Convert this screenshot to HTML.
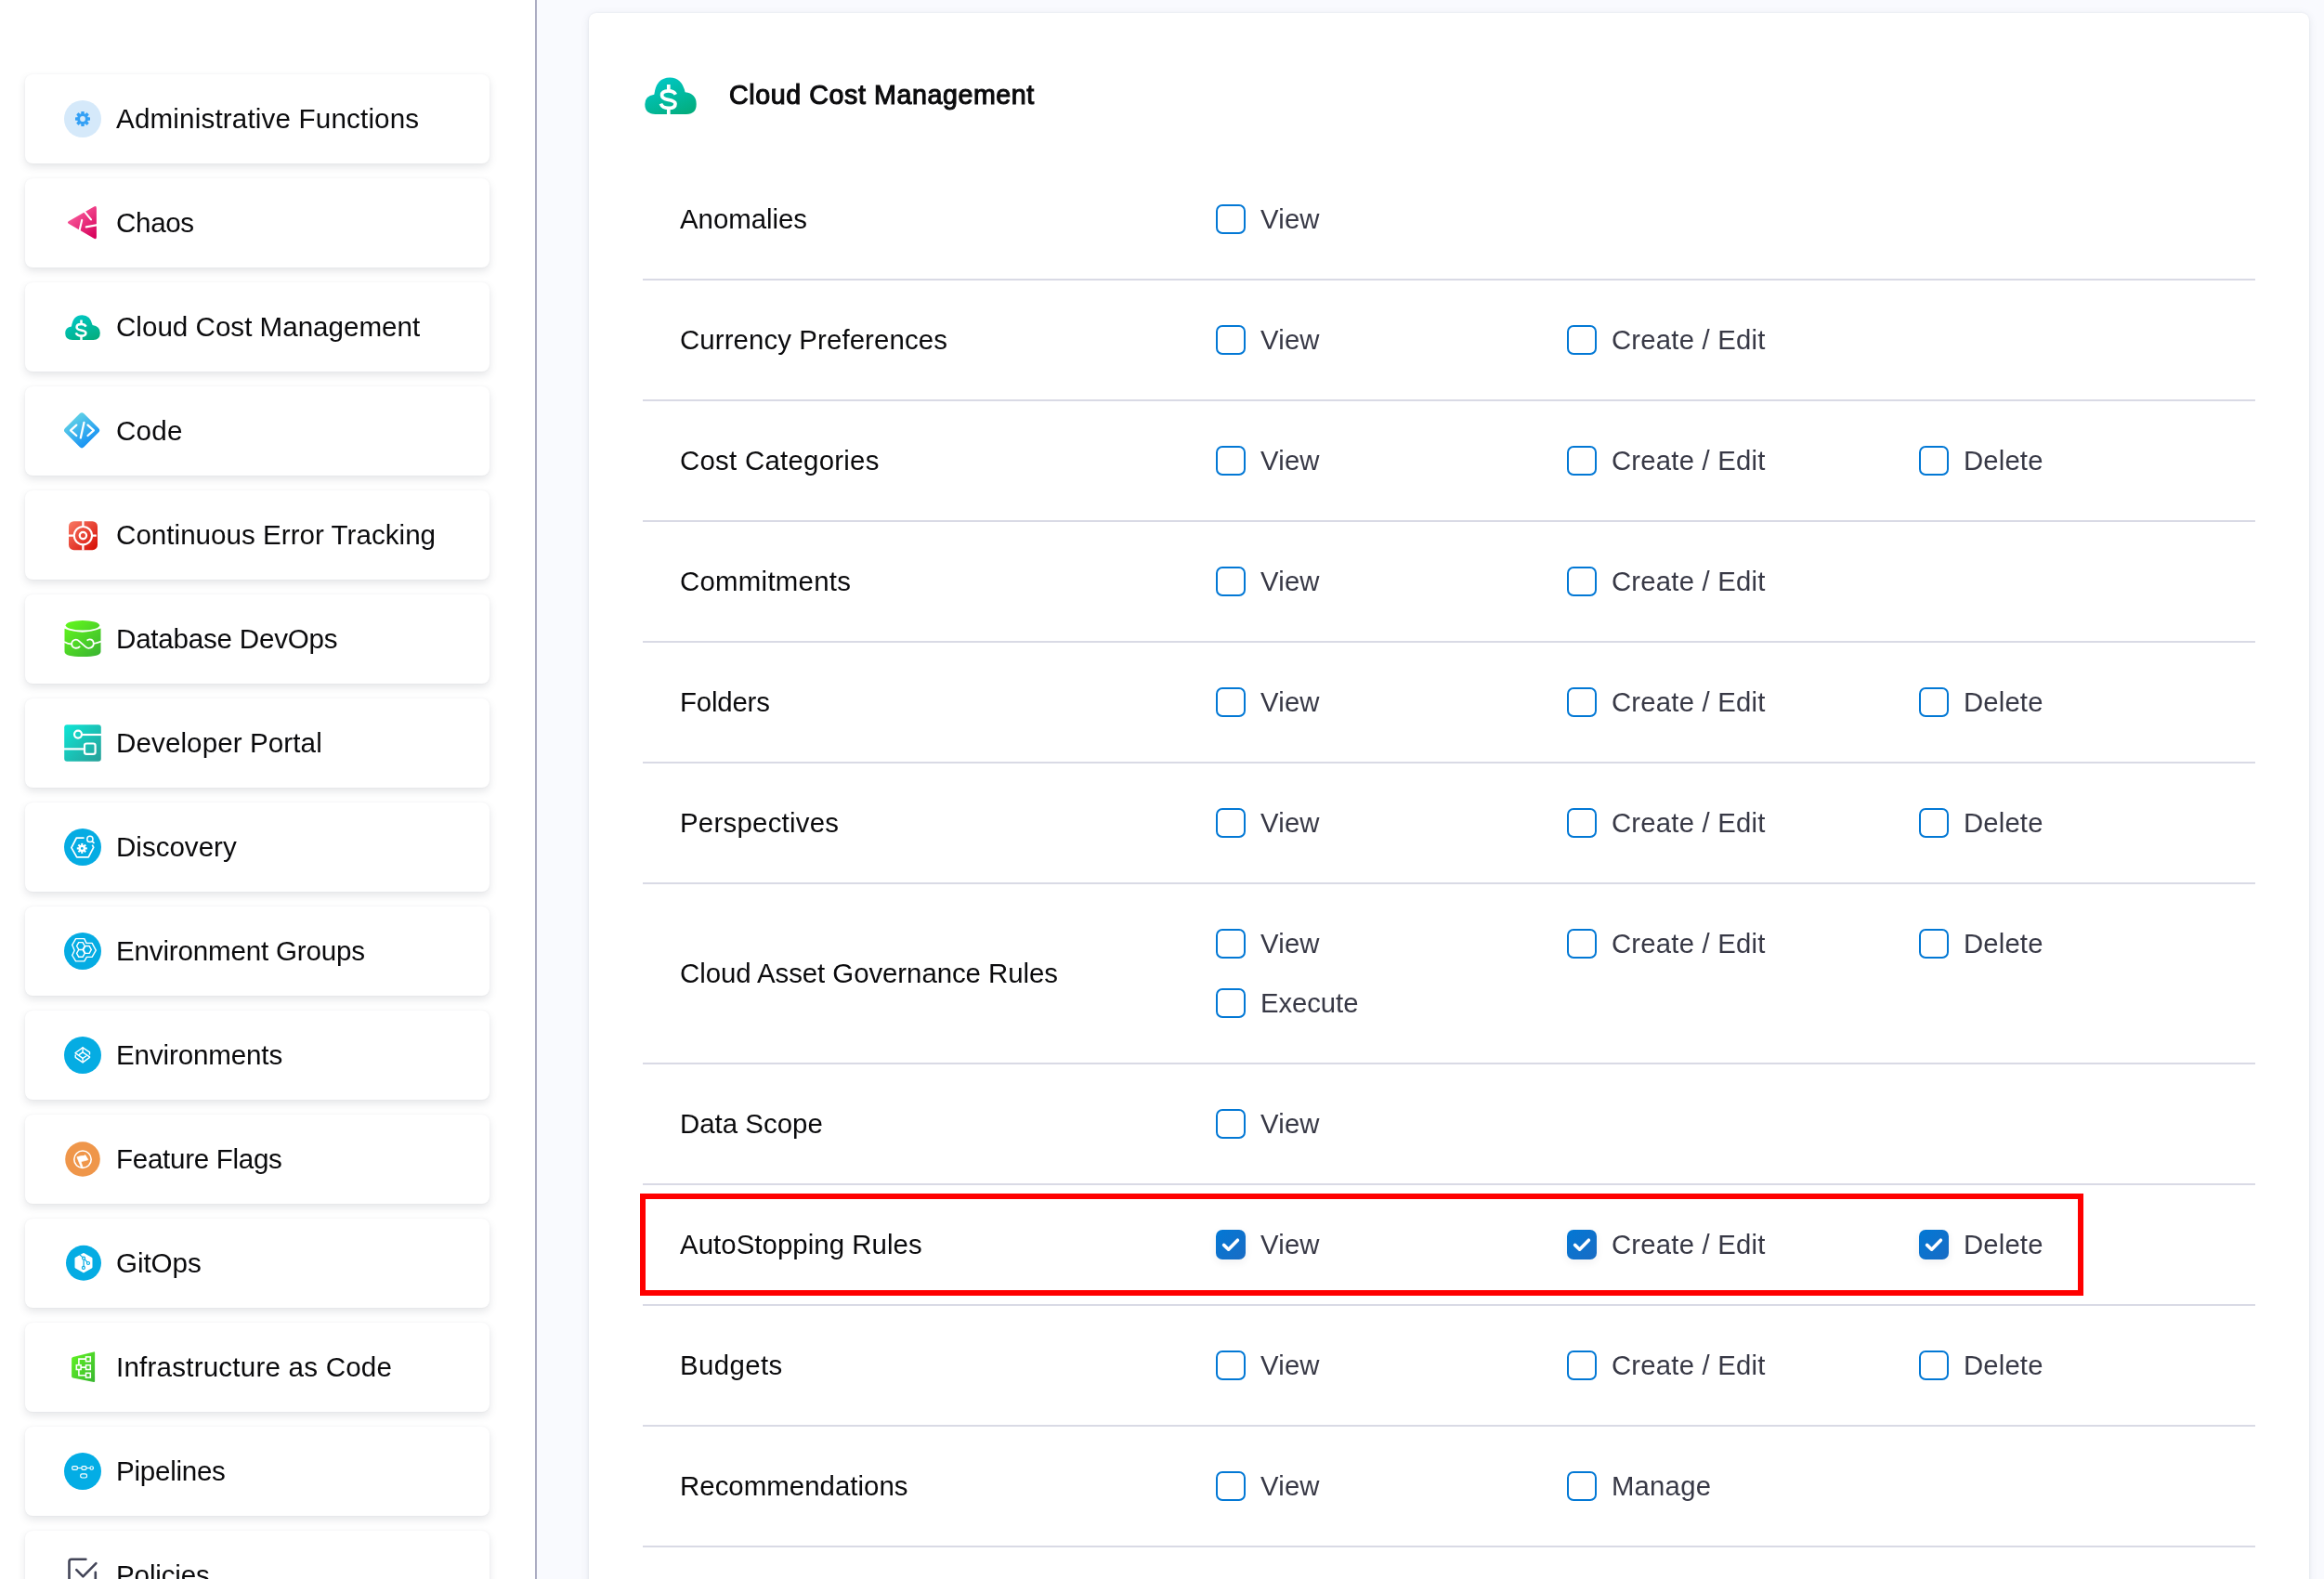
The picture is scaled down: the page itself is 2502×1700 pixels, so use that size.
<!DOCTYPE html><html><head><meta charset="utf-8"><title>Permissions</title><style>
*{box-sizing:border-box;margin:0;padding:0}
html,body{width:2502px;height:1700px;overflow:hidden;background:#fff;font-family:"Liberation Sans",sans-serif}
.tx,.ptitle,.rl,.cl{will-change:transform}
#side{position:absolute;left:0;top:0;width:576px;height:1700px;background:#fff}
#divider{position:absolute;left:576px;top:0;width:2px;height:1700px;background:#abacc2}
#right{position:absolute;left:578px;top:0;width:1924px;height:1700px;background:#f9fafe}
.card{position:absolute;left:27px;width:500px;height:96px;background:#fff;border-radius:8px;box-shadow:0 0 2px rgba(40,41,61,.06),0 4px 8px rgba(96,97,112,.16)}
.card .ic{position:absolute;left:42px;top:28px;width:40px;height:40px}
.card .ic svg{display:block}
.card .tx{position:absolute;left:98px;top:28px;height:40px;line-height:40px;font-size:29.6px;color:#0b0b0d;white-space:nowrap;letter-spacing:0.1px}
#panel{position:absolute;left:634px;top:14px;width:1852px;height:1800px;background:#fff;border-radius:8px;box-shadow:0 0 2px rgba(40,50,70,.08),0 2px 8px rgba(80,95,115,.13)}
.ptitle{position:absolute;left:785px;top:82px;line-height:40px;font-size:28.6px;font-weight:normal;-webkit-text-stroke:1.1px #0b0b0d;letter-spacing:0.6px;color:#0b0b0d;white-space:nowrap}
.sep{position:absolute;left:692px;width:1736px;height:2px;background:#d9dae5}
.rl{position:absolute;left:732px;line-height:40px;height:40px;font-size:29.4px;color:#0b0b0d;white-space:nowrap}
.cb{position:absolute;width:32px;height:32px;border:2px solid #0278d5;border-radius:7px;background:#fff}
.cb.on{border:none;background:linear-gradient(135deg,#0278d5,#1a6cc4);box-shadow:0 3px 9px rgba(40,41,61,.07)}
.cb svg{display:block}
.cl{position:absolute;line-height:40px;height:40px;font-size:29.3px;letter-spacing:0.35px;color:#383946;white-space:nowrap}
#red{position:absolute;left:689px;top:1285px;width:1554px;height:110px;border:6px solid #ff0000}
</style></head><body>
<div id="side">
<div class="card" style="top:80px"><div class="ic"><svg width="40" height="40" viewBox="0 0 40 40"><circle cx="20" cy="20" r="20" fill="#d5e9fa"/>
<g fill="#34a0f5" transform="translate(20 20)">
<rect x="-1.7" y="-8" width="3.4" height="16" rx="0.6"/>
<rect x="-1.7" y="-8" width="3.4" height="16" rx="0.6" transform="rotate(45)"/>
<rect x="-1.7" y="-8" width="3.4" height="16" rx="0.6" transform="rotate(90)"/>
<rect x="-1.7" y="-8" width="3.4" height="16" rx="0.6" transform="rotate(135)"/>
<circle r="5.9"/></g><circle cx="20" cy="20" r="2.9" fill="#d5e9fa"/></svg></div><div class="tx" style="letter-spacing:0.165px">Administrative Functions</div></div>
<div class="card" style="top:192px"><div class="ic"><svg width="40" height="40" viewBox="0 0 40 40"><defs><linearGradient id="gch" x1="0.2" y1="0.1" x2="0.9" y2="1"><stop offset="0" stop-color="#fb5e9e"/><stop offset="1" stop-color="#d6005a"/></linearGradient></defs>
<path d="M5.2 18 L32.2 2.5 Q34.9 1 34.9 4.2 L34.9 35 Q34.9 38.2 32.2 36.7 L5.2 21 Q2.6 19.5 5.2 18 Z" fill="url(#gch)"/>
<g stroke="#fff" stroke-width="2.1" fill="none" stroke-linecap="round"><path d="M21.8 7.6 L29 16.4"/><path d="M36 22.1 L23.7 24.4"/><path d="M19.2 16.9 L16.3 29.2"/></g></svg></div><div class="tx" style="letter-spacing:-0.350px">Chaos</div></div>
<div class="card" style="top:304px"><div class="ic"><div style="margin:7px 0 0 1px"><svg width="38" height="27" viewBox="0 0 38 27"><defs><linearGradient id="gcc1" x1="0.2" y1="0" x2="0.8" y2="1"><stop offset="0" stop-color="#00c9c8"/><stop offset="1" stop-color="#03ad7e"/></linearGradient></defs>
<path d="M8 27 Q0.2 27 0.2 19.8 Q0.2 13.5 7 12.6 Q8.5 0.2 18.5 0.2 Q27.2 0.2 29.6 11 Q37.8 12 37.8 19.6 Q37.8 27 30.5 27 Z" fill="url(#gcc1)"/>
<path d="M22.6 12.6 Q21.4 10 17.4 10 Q12.6 10 12.6 13.2 Q12.6 15.6 17.2 16.5 Q22.4 17.5 22.4 19.4 Q22.4 22.6 17.4 22.6 Q13 22.6 11.8 19.4" stroke="#fff" stroke-width="2.55" fill="none"/>
<path d="M17.5 5.4 V10 M17.5 22.4 V27.2" stroke="#fff" stroke-width="2.5"/></svg></div></div><div class="tx" style="letter-spacing:-0.005px">Cloud Cost Management</div></div>
<div class="card" style="top:416px"><div class="ic"><svg width="40" height="40" viewBox="0 0 40 40" style="overflow:visible"><defs><linearGradient id="gcode" x1="0.25" y1="0.1" x2="0.85" y2="0.95"><stop offset="0" stop-color="#62d3e6"/><stop offset="1" stop-color="#0c88f6"/></linearGradient></defs>
<path d="M16.84 1.26 Q19.1 -1 21.36 1.26 L37.14 17.04 Q39.4 19.3 37.14 21.56 L21.36 37.34 Q19.1 39.6 16.84 37.34 L1.06 21.56 Q-1.2 19.3 1.06 17.04 Z" fill="url(#gcode)"/>
<g stroke="#fff" stroke-width="2.3" fill="none" stroke-linecap="round" stroke-linejoin="round"><path d="M13.3 13.6 L7 19.3 L13.3 25"/><path d="M25.5 13.6 L31.9 19.3 L25.5 25"/><path d="M21.5 10.8 L17.8 27.4"/></g></svg></div><div class="tx" style="letter-spacing:0.233px">Code</div></div>
<div class="card" style="top:528px"><div class="ic"><svg width="40" height="40" viewBox="0 0 40 40"><defs><linearGradient id="gcet" x1="0" y1="0" x2="1" y2="1"><stop offset="0" stop-color="#f97a66"/><stop offset="1" stop-color="#d50c02"/></linearGradient></defs>
<rect x="5" y="5.2" width="31" height="31" rx="5.5" fill="url(#gcet)"/>
<g stroke="#fff" fill="none"><circle cx="20.4" cy="20.6" r="9.6" stroke-width="2.1"/><circle cx="20.4" cy="20.6" r="3.65" stroke-width="2.3"/>
<path d="M20.4 5 V11 M20.4 30.2 V36.4 M5 20.6 H10.8 M30 20.6 H34.8" stroke-width="2.3"/></g></svg></div><div class="tx" style="letter-spacing:0.013px">Continuous Error Tracking</div></div>
<div class="card" style="top:640px"><div class="ic"><svg width="40" height="40" viewBox="0 0 40 40"><defs><linearGradient id="gdb" gradientUnits="userSpaceOnUse" x1="4" y1="0" x2="36" y2="40"><stop offset="0" stop-color="#62f71c"/><stop offset="1" stop-color="#3ab431"/></linearGradient></defs>
<ellipse cx="19.9" cy="5.3" rx="18.2" ry="5.2" fill="url(#gdb)"/>
<path d="M0.5 8.8 Q20 16.6 39.5 8.5 V33.4 Q39.5 39 20 39 Q0.5 39 0.5 33.4 Z" fill="url(#gdb)"/>
<g stroke="#fff" stroke-width="1.75" fill="none" stroke-linecap="butt"><path d="M0 23 C3 24.6, 6 25.6, 8.1 25.4 C8.1 20.8, 13.4 19.4, 16 22.2 L23.4 28.6 C26 31, 31.8 29.6, 31.8 25 C31.8 20.6, 27.2 19, 24.6 21.6"/><path d="M8.1 25.4 C8.4 30.2, 14.2 31, 17.2 27.8"/><path d="M31.8 25 C34.2 24.6, 37 24, 40 22.6"/></g></svg></div><div class="tx" style="letter-spacing:-0.236px">Database DevOps</div></div>
<div class="card" style="top:752px"><div class="ic"><svg width="40" height="40" viewBox="0 0 40 40"><defs><linearGradient id="gdp" x1="0" y1="0" x2="1" y2="1"><stop offset="0" stop-color="#0de6d6"/><stop offset="1" stop-color="#279f97"/></linearGradient></defs>
<rect x="0.2" y="0.2" width="39.6" height="39.6" rx="3" fill="url(#gdp)"/>
<g stroke="#fff" stroke-width="2.2" fill="none"><circle cx="15" cy="10.6" r="4"/><path d="M19 11 H40"/><rect x="22" y="20.5" width="11.6" height="11.4" rx="2.2"/><path d="M0 26.4 H22"/></g></svg></div><div class="tx" style="letter-spacing:0.087px">Developer Portal</div></div>
<div class="card" style="top:864px"><div class="ic"><svg width="40" height="40" viewBox="0 0 40 40"><circle cx="20" cy="20" r="20" fill="#05ace3"/><g stroke="#fff" stroke-width="1.75" fill="none" stroke-linejoin="round"><path d="M21.6 10 H13.4 L7.9 20.6 L13.7 30.9 H26.2 L31.7 20.4 L30.3 17.6"/></g><g stroke="#fff" fill="none"><circle cx="27.9" cy="11.4" r="3.1" stroke-width="1.5"/><path d="M30.2 13.8 L32.5 15.9" stroke-width="1.7"/></g>
<g fill="#fff" transform="translate(19.3 21.4)"><circle r="3.7"/><rect x="-1.05" y="-5.5" width="2.1" height="11" transform="rotate(0)"/><rect x="-1.05" y="-5.5" width="2.1" height="11" transform="rotate(45)"/><rect x="-1.05" y="-5.5" width="2.1" height="11" transform="rotate(90)"/><rect x="-1.05" y="-5.5" width="2.1" height="11" transform="rotate(135)"/></g><circle cx="19.3" cy="21.4" r="1.35" fill="#05ace3"/></svg></div><div class="tx" style="letter-spacing:-0.025px">Discovery</div></div>
<div class="card" style="top:976px"><div class="ic"><svg width="40" height="40" viewBox="0 0 40 40"><circle cx="20" cy="20" r="20" fill="#05ace3"/><g stroke="#fff" stroke-width="1.4" fill="none" stroke-linejoin="round"><path d="M12.6 6.6 H21.8 L24 11.4 H30.1 L34.3 19.2 L30.1 26.4 H24.4 L21.8 30.9 H12.6 L8.7 24.5 L11.2 19.2 L8.7 13.3 Z"/><path d="M13.60 14.50 L15.75 10.60 L20.05 10.60 L22.20 14.50 L20.05 18.40 L15.75 18.40 Z M13.60 22.40 L15.75 18.50 L20.05 18.50 L22.20 22.40 L20.05 26.30 L15.75 26.30 Z M20.70 18.45 L22.85 14.55 L27.15 14.55 L29.30 18.45 L27.15 22.35 L22.85 22.35 Z"/></g></svg></div><div class="tx" style="letter-spacing:-0.194px">Environment Groups</div></div>
<div class="card" style="top:1088px"><div class="ic"><svg width="40" height="40" viewBox="0 0 40 40"><circle cx="20" cy="20" r="20" fill="#05ace3"/><g stroke="#fff" stroke-width="1.45" fill="none" stroke-linejoin="round" stroke-linecap="round"><path d="M12.2 17.5 L20.1 11.8 L27.5 16.8 V19"/><path d="M20.1 12 V16.8"/><path d="M16.4 19.4 L20.1 16.9 L27.5 21.8 V22.4 L20.1 27.9 L12.2 22.3 V20"/><path d="M12.3 17.8 L20.1 23.3 L23.8 21"/><path d="M20.1 23.4 V27.4"/></g></svg></div><div class="tx" style="letter-spacing:-0.155px">Environments</div></div>
<div class="card" style="top:1200px"><div class="ic"><svg width="40" height="40" viewBox="0 0 40 40"><circle cx="20" cy="20" r="18.8" fill="#ef964a"/><circle cx="20" cy="20.2" r="9.2" stroke="#fff" stroke-width="1.6" fill="none"/>
<path d="M13.9 17.8 Q17.5 16.6 20 16.6 Q21.6 16.6 22.8 15.6 L25.8 20.6 Q23 21.6 18 22.6 L20 28.6 L18.6 29.2 Z" fill="#fff" stroke="#fff" stroke-width="0.8" stroke-linejoin="round"/></svg></div><div class="tx" style="letter-spacing:-0.308px">Feature Flags</div></div>
<div class="card" style="top:1312px"><div class="ic"><svg width="40" height="40" viewBox="0 0 40 40"><circle cx="21" cy="19.7" r="19" fill="#05ace3"/>
<path d="M21 10.6 L29 15.1 L29 24.3 L21 28.8 L13 24.3 L13 15.1 Z" fill="#fff" stroke="#fff" stroke-width="3" stroke-linejoin="round"/>
<g stroke="#05ace3" stroke-width="1.2" fill="none"><path d="M16.6 10.6 L20 13.6 M21.1 16.2 V23.3 M22.3 15.8 L24.9 18.8"/><circle cx="21.1" cy="14.7" r="1.5"/><circle cx="26" cy="20" r="1.5"/><circle cx="20.9" cy="24.9" r="1.5"/></g></svg></div><div class="tx" style="letter-spacing:-0.080px">GitOps</div></div>
<div class="card" style="top:1424px"><div class="ic"><svg width="40" height="40" viewBox="0 0 40 40"><defs><linearGradient id="giac" x1="0" y1="0" x2="1" y2="1"><stop offset="0" stop-color="#62f522"/><stop offset="1" stop-color="#38b630"/></linearGradient></defs>
<path d="M8.1 10.8 Q8.1 9.3 9.6 8.9 L32 3.4 Q33.1 3.2 33.1 4.3 V35.1 Q33.1 36.2 32 36 L9.6 31.6 Q8.1 31.2 8.1 29.7 Z" fill="url(#giac)"/>
<g stroke="#fff" stroke-width="1.55" fill="none"><rect x="13.3" y="17.7" width="4.8" height="4.8"/><rect x="23.5" y="8.9" width="4.8" height="4.8"/><rect x="23.5" y="17.7" width="4.8" height="4.8"/><rect x="23.5" y="26.3" width="4.8" height="4.8"/><path d="M15.9 11.1 V17.7 M15.9 22.5 V28.8 M15.1 11.1 H23.5 M18.1 20.1 H23.5 M15.1 28.8 H23.5"/></g></svg></div><div class="tx" style="letter-spacing:0.200px">Infrastructure as Code</div></div>
<div class="card" style="top:1536px"><div class="ic"><svg width="40" height="40" viewBox="0 0 40 40"><circle cx="20" cy="20" r="20" fill="#03ade5"/><g stroke="#fff" stroke-width="1.2" fill="none"><rect x="8.7" y="14.7" width="5.7" height="3.7" rx="1.4"/><rect x="18.9" y="14.7" width="5.1" height="3.7" rx="1.4"/><circle cx="29.7" cy="16.5" r="1.75"/><path d="M14.4 16.5 H18.9 M24 16.5 H27.9"/><rect x="17.7" y="22.8" width="6.8" height="4.2" rx="1.7"/></g></svg></div><div class="tx" style="letter-spacing:-0.275px">Pipelines</div></div>
<div class="card" style="top:1648px"><div class="ic"><svg width="40" height="40" viewBox="0 0 40 40"><g stroke="#434558" stroke-width="2.6" fill="none" stroke-linejoin="round" stroke-linecap="round"><path d="M23.4 2.8 H8 Q5.5 2.8 5.5 5.3 V37 H33.8 V16.8"/><path d="M13.3 14.2 L20.4 21.4 L34.4 7.1"/></g></svg></div><div class="tx" style="letter-spacing:-0.157px">Policies</div></div>
</div><div id="divider"></div><div id="right"></div>
<div id="panel"></div>
<div style="position:absolute;left:694px;top:83px"><svg width="56" height="40" viewBox="0 0 38 27"><defs><linearGradient id="gcc2" x1="0.2" y1="0" x2="0.8" y2="1"><stop offset="0" stop-color="#00c9c8"/><stop offset="1" stop-color="#03ad7e"/></linearGradient></defs>
<path d="M8 27 Q0.2 27 0.2 19.8 Q0.2 13.5 7 12.6 Q8.5 0.2 18.5 0.2 Q27.2 0.2 29.6 11 Q37.8 12 37.8 19.6 Q37.8 27 30.5 27 Z" fill="url(#gcc2)"/>
<path d="M22.6 12.6 Q21.4 10 17.4 10 Q12.6 10 12.6 13.2 Q12.6 15.6 17.2 16.5 Q22.4 17.5 22.4 19.4 Q22.4 22.6 17.4 22.6 Q13 22.6 11.8 19.4" stroke="#fff" stroke-width="2.55" fill="none"/>
<path d="M17.5 5.4 V10 M17.5 22.4 V27.2" stroke="#fff" stroke-width="2.5"/></svg></div>
<div class="ptitle">Cloud Cost Management</div>
<div class="sep" style="top:300px"></div>
<div class="sep" style="top:430px"></div>
<div class="sep" style="top:560px"></div>
<div class="sep" style="top:690px"></div>
<div class="sep" style="top:820px"></div>
<div class="sep" style="top:950px"></div>
<div class="sep" style="top:1144px"></div>
<div class="sep" style="top:1274px"></div>
<div class="sep" style="top:1404px"></div>
<div class="sep" style="top:1534px"></div>
<div class="sep" style="top:1664px"></div>
<div class="rl" style="top:216px;letter-spacing:-0.025px">Anomalies</div>
<div class="cb" style="left:1309px;top:220px"></div><div class="cl" style="left:1357px;top:216px;letter-spacing:0.183px">View</div>
<div class="rl" style="top:346px;letter-spacing:0.105px">Currency Preferences</div>
<div class="cb" style="left:1309px;top:350px"></div><div class="cl" style="left:1357px;top:346px;letter-spacing:0.183px">View</div>
<div class="cb" style="left:1687px;top:350px"></div><div class="cl" style="left:1735px;top:346px;letter-spacing:0.217px">Create / Edit</div>
<div class="rl" style="top:476px;letter-spacing:0.264px">Cost Categories</div>
<div class="cb" style="left:1309px;top:480px"></div><div class="cl" style="left:1357px;top:476px;letter-spacing:0.183px">View</div>
<div class="cb" style="left:1687px;top:480px"></div><div class="cl" style="left:1735px;top:476px;letter-spacing:0.217px">Create / Edit</div>
<div class="cb" style="left:2066px;top:480px"></div><div class="cl" style="left:2114px;top:476px;letter-spacing:0.150px">Delete</div>
<div class="rl" style="top:606px;letter-spacing:0.270px">Commitments</div>
<div class="cb" style="left:1309px;top:610px"></div><div class="cl" style="left:1357px;top:606px;letter-spacing:0.183px">View</div>
<div class="cb" style="left:1687px;top:610px"></div><div class="cl" style="left:1735px;top:606px;letter-spacing:0.217px">Create / Edit</div>
<div class="rl" style="top:736px;letter-spacing:-0.183px">Folders</div>
<div class="cb" style="left:1309px;top:740px"></div><div class="cl" style="left:1357px;top:736px;letter-spacing:0.183px">View</div>
<div class="cb" style="left:1687px;top:740px"></div><div class="cl" style="left:1735px;top:736px;letter-spacing:0.217px">Create / Edit</div>
<div class="cb" style="left:2066px;top:740px"></div><div class="cl" style="left:2114px;top:736px;letter-spacing:0.150px">Delete</div>
<div class="rl" style="top:866px;letter-spacing:0.255px">Perspectives</div>
<div class="cb" style="left:1309px;top:870px"></div><div class="cl" style="left:1357px;top:866px;letter-spacing:0.183px">View</div>
<div class="cb" style="left:1687px;top:870px"></div><div class="cl" style="left:1735px;top:866px;letter-spacing:0.217px">Create / Edit</div>
<div class="cb" style="left:2066px;top:870px"></div><div class="cl" style="left:2114px;top:866px;letter-spacing:0.150px">Delete</div>
<div class="rl" style="top:1028px;letter-spacing:-0.056px">Cloud Asset Governance Rules</div>
<div class="cb" style="left:1309px;top:1000px"></div><div class="cl" style="left:1357px;top:996px;letter-spacing:0.183px">View</div>
<div class="cb" style="left:1687px;top:1000px"></div><div class="cl" style="left:1735px;top:996px;letter-spacing:0.217px">Create / Edit</div>
<div class="cb" style="left:2066px;top:1000px"></div><div class="cl" style="left:2114px;top:996px;letter-spacing:0.150px">Delete</div>
<div class="cb" style="left:1309px;top:1064px"></div><div class="cl" style="left:1357px;top:1060px;letter-spacing:-0.067px">Execute</div>
<div class="rl" style="top:1190px;letter-spacing:0.022px">Data Scope</div>
<div class="cb" style="left:1309px;top:1194px"></div><div class="cl" style="left:1357px;top:1190px;letter-spacing:0.183px">View</div>
<div class="rl" style="top:1320px;letter-spacing:0.053px">AutoStopping Rules</div>
<div class="cb on" style="left:1309px;top:1324px"><svg width="32" height="32" viewBox="0 0 32 32"><path d="M8.6 16.4 L13.6 21.2 L23.4 11.2" stroke="#fff" stroke-width="3.6" fill="none" stroke-linecap="round" stroke-linejoin="round"/></svg></div><div class="cl" style="left:1357px;top:1320px;letter-spacing:0.183px">View</div>
<div class="cb on" style="left:1687px;top:1324px"><svg width="32" height="32" viewBox="0 0 32 32"><path d="M8.6 16.4 L13.6 21.2 L23.4 11.2" stroke="#fff" stroke-width="3.6" fill="none" stroke-linecap="round" stroke-linejoin="round"/></svg></div><div class="cl" style="left:1735px;top:1320px;letter-spacing:0.217px">Create / Edit</div>
<div class="cb on" style="left:2066px;top:1324px"><svg width="32" height="32" viewBox="0 0 32 32"><path d="M8.6 16.4 L13.6 21.2 L23.4 11.2" stroke="#fff" stroke-width="3.6" fill="none" stroke-linecap="round" stroke-linejoin="round"/></svg></div><div class="cl" style="left:2114px;top:1320px;letter-spacing:0.150px">Delete</div>
<div class="rl" style="top:1450px;letter-spacing:0.383px">Budgets</div>
<div class="cb" style="left:1309px;top:1454px"></div><div class="cl" style="left:1357px;top:1450px;letter-spacing:0.183px">View</div>
<div class="cb" style="left:1687px;top:1454px"></div><div class="cl" style="left:1735px;top:1450px;letter-spacing:0.217px">Create / Edit</div>
<div class="cb" style="left:2066px;top:1454px"></div><div class="cl" style="left:2114px;top:1450px;letter-spacing:0.150px">Delete</div>
<div class="rl" style="top:1580px;letter-spacing:0.036px">Recommendations</div>
<div class="cb" style="left:1309px;top:1584px"></div><div class="cl" style="left:1357px;top:1580px;letter-spacing:0.183px">View</div>
<div class="cb" style="left:1687px;top:1584px"></div><div class="cl" style="left:1735px;top:1580px;letter-spacing:0.210px">Manage</div>
<div id="red"></div>
</body></html>
